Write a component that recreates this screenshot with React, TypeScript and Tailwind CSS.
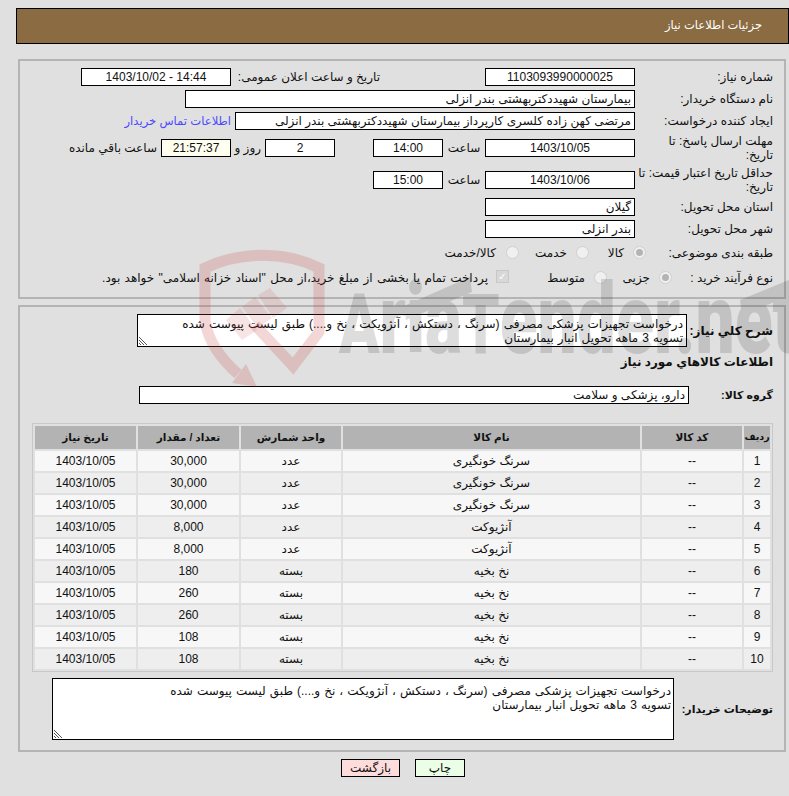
import React from "react";

const Box = ({ w, children, center, bg }: { w: string; children?: React.ReactNode; center?: boolean; bg?: string }) => (
  <div className={`${w} ${bg ?? "bg-white"} h-[18px] shrink-0 border border-black px-[3px] leading-[16px] whitespace-nowrap overflow-hidden ${center ? "text-center" : "text-right"}`}>
    {children}
  </div>
);

const Radio = ({ on }: { on?: boolean }) => (
  <span className="-mt-[2px] flex h-[13px] w-[13px] shrink-0 items-center justify-center rounded-full border border-[#d0d0d0] bg-[#f0f0f0]">
    {on && <span className="h-[7px] w-[7px] rounded-full bg-[#b4b4b4]" />}
  </span>
);

const Grip = () => (
  <svg className="absolute bottom-0 left-0" width="10" height="10" viewBox="0 0 10 10">
    <path d="M1 1L9 9M1 4L6 9M1 7L3 9" stroke="#555" strokeWidth="1" fill="none" />
  </svg>
);

const rows = [
  ["1", "--", "سرنگ خونگیری", "عدد", "30,000"],
  ["2", "--", "سرنگ خونگیری", "عدد", "30,000"],
  ["3", "--", "سرنگ خونگیری", "عدد", "30,000"],
  ["4", "--", "آنژیوکت", "عدد", "8,000"],
  ["5", "--", "آنژیوکت", "عدد", "8,000"],
  ["6", "--", "نخ بخیه", "بسته", "180"],
  ["7", "--", "نخ بخیه", "بسته", "260"],
  ["8", "--", "نخ بخیه", "بسته", "260"],
  ["9", "--", "نخ بخیه", "بسته", "108"],
  ["10", "--", "نخ بخیه", "بسته", "108"],
];

const Watermark = () => (
  <svg dir="ltr" className="pointer-events-none absolute left-0 top-0 z-10" width="789" height="420" viewBox="0 0 789 420">
    <g opacity="0.2">
      <path d="M205 322V268C240 251 285 251 319 268V332L293 366L255 325" fill="none" stroke="#c83c3c" strokeWidth="11" />
      <path d="M205 322C209 342 222 360 238 374" fill="none" stroke="#c83c3c" strokeWidth="11" />
      <path d="M232 383L246 364L257 387Z" fill="#c83c3c" />
    </g>
    <g opacity="0.13" fill="#c83c3c">
      <path d="M226 320L240 308L257 330L242 340Z" />
      <path d="M242 307L255 297L272 318L258 328Z" />
      <path d="M258 295L270 288L287 308L273 318Z" />
    </g>
    <g opacity="0.13" fill="#000">
      <text direction="ltr" textAnchor="start" transform="translate(339 353) scale(0.71 1)" fontFamily="Roboto" fontWeight="900" fontSize="84">
        A<tspan fontSize="98">ria</tspan>T<tspan fontSize="98">ender.net</tspan>
      </text>
      <path d="M404 306L470 277L472 292L406 320Z" />
      <path d="M740 300L789 280V296L742 315Z" />
    </g>
  </svg>
);

export default function App() {
  return (
    <div
      dir="rtl"
      className="relative min-h-screen overflow-hidden bg-[#e0e0e0] text-[12px] text-[#111]"
      style={{ fontFamily: '"Liberation Sans", "DejaVu Sans", sans-serif' }}
    >
      <div className="relative pt-2">
        <div className="ml-4 flex h-9 items-center border border-black bg-[#8b6b41] pr-[26px] text-[11.5px] text-white">
          جزئیات اطلاعات نیاز
        </div>

        <div className="ml-[18px] mr-[3px] mt-[15px] border-2 border-[#b4b4b4] pb-[7px] pr-[11px] pt-[5px]">
          <div className="flex h-[22px] items-center">
            <div className="w-[138px] shrink-0">شماره نیاز:</div>
            <Box w="w-[150px]" center>1103093990000025</Box>
            <div className="mr-[105px] w-[149px] shrink-0">تاریخ و ساعت اعلان عمومی:</div>
            <Box w="w-[150px]" center><span dir="ltr">1403/10/02 - 14:44</span></Box>
          </div>
          <div className="flex h-[22px] items-center">
            <div className="w-[138px] shrink-0">نام دستگاه خریدار:</div>
            <Box w="w-[450px]">بیمارستان شهیددکتربهشتی بندر انزلی</Box>
          </div>
          <div className="flex h-[22px] items-center">
            <div className="w-[138px] shrink-0">ایجاد کننده درخواست:</div>
            <Box w="w-[400px]">مرتضی کهن زاده کلسری کارپرداز بیمارستان شهیددکتربهشتی بندر انزلی</Box>
            <a className="mr-1 whitespace-nowrap text-[11.6px] text-[#4a4aff]">اطلاعات تماس خریدار</a>
          </div>
          <div className="flex h-[32px] items-center">
            <div className="w-[138px] shrink-0 leading-[14px]">مهلت ارسال پاسخ: تا<br />تاریخ:</div>
            <Box w="w-[150px]" center>1403/10/05</Box>
            <div className="w-[42px] shrink-0 text-center">ساعت</div>
            <Box w="w-[70px]" center>14:00</Box>
            <div className="w-[38px] shrink-0" />
            <Box w="w-[70px]" center>2</Box>
            <div className="w-[34px] shrink-0 pr-[4px]">روز و</div>
            <Box w="w-[70px]" center bg="bg-[#fffff0]">21:57:37</Box>
            <div className="mr-1 whitespace-nowrap">ساعت باقي مانده</div>
          </div>
          <div className="flex h-[32px] items-center">
            <div className="w-[138px] shrink-0 leading-[14px]">حداقل تاریخ اعتبار قیمت: تا<br />تاریخ:</div>
            <Box w="w-[150px]" center>1403/10/06</Box>
            <div className="w-[42px] shrink-0 text-center">ساعت</div>
            <Box w="w-[70px]" center>15:00</Box>
          </div>
          <div className="flex h-[22px] items-center">
            <div className="w-[138px] shrink-0">استان محل تحویل:</div>
            <Box w="w-[150px]">گیلان</Box>
          </div>
          <div className="flex h-[22px] items-center">
            <div className="w-[138px] shrink-0">شهر محل تحویل:</div>
            <Box w="w-[150px]">بندر انزلی</Box>
          </div>
          <div className="flex h-[26px] items-center">
            <div className="w-[127px] shrink-0">طبقه بندی موضوعی:</div>
            <Radio on />
            <div className="mr-[9px] w-[35px] shrink-0">کالا</div>
            <Radio />
            <div className="mr-[9px] w-[48px] shrink-0">خدمت</div>
            <Radio />
            <div className="mr-[10px] whitespace-nowrap">کالا/خدمت</div>
          </div>
          <div className="flex h-[24px] items-center">
            <div className="w-[101px] shrink-0">نوع فرآیند خرید :</div>
            <Radio on />
            <div className="mr-[9px] w-[43px] shrink-0">جزیی</div>
            <Radio />
            <div className="mr-[9px] w-[76px] shrink-0">متوسط</div>
            <span className="-mt-[3px] flex h-[13px] w-[13px] shrink-0 items-center justify-center border border-[#c8c8c8] bg-[#d8d8d8] text-[10px] leading-none text-white">✓</span>
            <div className="mr-[8px] whitespace-nowrap [word-spacing:1px]">پرداخت تمام یا بخشی از مبلغ خرید،از محل "اسناد خزانه اسلامی" خواهد بود.</div>
          </div>
        </div>

        <div className="ml-[18px] mr-[3px] mt-[6px] border-2 border-[#b4b4b4] pb-[10px] pr-[11px] pt-[7px]">
          <div className="flex items-center">
            <div className="w-[86px] shrink-0 font-bold">شرح کلي نیاز:</div>
            <div className="relative h-[33px] w-[550px] shrink-0 whitespace-pre-line border border-black bg-white px-[3px] pt-[2px] leading-[14px] [word-spacing:0.7px]">
              {"درخواست تجهیزات پزشکی مصرفی (سرنگ ، دستکش ، آنژویکت ، نخ و....) طبق لیست پیوست شده\nتسویه 3 ماهه تحویل انبار بیمارستان"}
              <Grip />
            </div>
          </div>
          <div className="mt-[6px] h-[18px] font-bold leading-[18px]">اطلاعات کالاهاي مورد نیاز</div>
          <div className="mt-[15px] flex items-center">
            <div className="w-[84px] shrink-0 text-[11px] font-bold">گروه کالا:</div>
            <Box w="w-[550px]">دارو، پزشکی و سلامت</Box>
          </div>

          <table className="mt-[19px] w-[741px] table-fixed border-separate border-spacing-[2px] border border-[#c8c8c8] text-center">
            <colgroup>
              <col className="w-[26px]" />
              <col className="w-[100px]" />
              <col className="w-[297px]" />
              <col className="w-[100px]" />
              <col className="w-[101px]" />
              <col className="w-[101px]" />
            </colgroup>
            <thead>
              <tr className="h-[23px] bg-[#b3b3b3] text-[10.5px] font-bold">
                <th className="p-0 text-[9.5px]">ردیف</th>
                <th className="p-0">کد کالا</th>
                <th className="p-0">نام کالا</th>
                <th className="p-0">واحد شمارش</th>
                <th className="p-0">تعداد / مقدار</th>
                <th className="p-0">تاریخ نیاز</th>
              </tr>
            </thead>
            <tbody>
              {rows.map((r, i) => (
                <tr key={r[0]} className={`h-[20px] ${i % 2 === 0 ? "bg-[#f7f7f7]" : "bg-[#eeeeee]"}`}>
                  {r.map((c, j) => (
                    <td key={j} className="p-0">{c}</td>
                  ))}
                  <td className="p-0">1403/10/05</td>
                </tr>
              ))}
            </tbody>
          </table>

          <div className="mt-[6px] flex items-center">
            <div className="w-[99px] shrink-0 whitespace-nowrap text-[11px] font-bold">توضیحات خریدار:</div>
            <div className="relative h-[62px] w-[622px] shrink-0 whitespace-pre-line border border-black bg-white px-[2px] pt-[5px] leading-[14px] [word-spacing:0.7px]">
              {"درخواست تجهیزات پزشکی مصرفی (سرنگ ، دستکش ، آنژویکت ، نخ و....) طبق لیست پیوست شده\nتسویه 3 ماهه تحویل انبار بیمارستان"}
              <Grip />
            </div>
          </div>
        </div>

        <div className="mt-[7px] flex justify-center gap-[15px] pl-[17px]">
          <button className="h-[18px] w-[50px] border border-black bg-[#eaffe5] leading-[14px]">چاپ</button>
          <button className="h-[18px] w-[59px] border border-black bg-[#ffdcdc] leading-[14px]">بازگشت</button>
        </div>
      </div>
      <Watermark />
    </div>
  );
}
